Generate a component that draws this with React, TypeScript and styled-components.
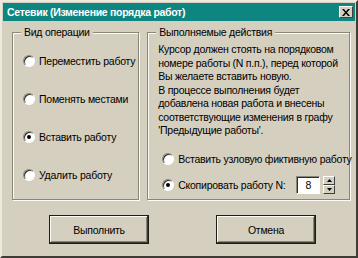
import React, { useState } from "react";
import styled, { createGlobalStyle } from "styled-components";

const GlobalStyle = createGlobalStyle`
  html, body {
    margin: 0;
    padding: 0;
    background: #d5cfbf;
  }
  body {
    font-family: "Liberation Sans", Arial, sans-serif;
    font-size: 10.5px;
    letter-spacing: -0.25px;
    color: #000;
  }
`;

const Window = styled.div`
  width: 358px;
  height: 258px;
  box-sizing: border-box;
  background: #d5cfbf;
  border: 2px solid;
  border-color: #ece9df #3f3c33 #3f3c33 #ece9df;
  display: flex;
  flex-direction: column;
  overflow: hidden;
`;

const TitleBar = styled.div`
  height: 18px;
  margin: 1px 1px 0;
  background: #0d8580;
  display: flex;
  align-items: center;
  justify-content: space-between;
  padding: 0 2px 0 4px;
`;

const Title = styled.span`
  color: #fff;
  font-family: "Liberation Sans", Arial, sans-serif;
  font-weight: bold;
  font-size: 10.5px;
  letter-spacing: -0.3px;
`;

const CloseButton = styled.div`
  width: 14px;
  height: 12px;
  box-sizing: border-box;
  background: #d5cfbf;
  border: 1px solid;
  border-color: #fff #404040 #404040 #fff;
  display: flex;
  align-items: center;
  justify-content: center;
`;

const Content = styled.div`
  flex: 1;
  display: flex;
  flex-direction: column;
  padding: 5px 6px 0 10px;
`;

const Groups = styled.div`
  display: flex;
  gap: 8px;
  height: 174px;
`;

const Group = styled.fieldset<{ $width: number }>`
  width: ${({ $width }) => $width}px;
  min-width: 0;
  box-sizing: border-box;
  margin: 0;
  padding: 0;
  border: 1px solid #8a8678;
  box-shadow: 1px 1px 0 #fbfaf5, inset 1px 1px 0 #fbfaf5;
  display: flex;
  flex-direction: column;
`;

const Legend = styled.legend`
  margin-left: 8px;
  padding: 0 3px;
  background: #d5cfbf;
  line-height: 13px;
`;

const OptionList = styled.div`
  display: flex;
  flex-direction: column;
  padding: 14px 0 0 10px;
  gap: 22px;
`;

const OptionRow = styled.label<{ $width?: number }>`
  display: flex;
  align-items: center;
  gap: 4px;
  height: 16px;
  width: ${({ $width }) => ($width ? `${$width}px` : "auto")};
  flex: none;
  white-space: nowrap;
  cursor: default;
`;

const Radio = styled.span<{ $checked: boolean }>`
  width: 12px;
  height: 12px;
  box-sizing: border-box;
  border-radius: 50%;
  background: #fff;
  border: 1px solid;
  border-color: #8a8678 #fff #fff #8a8678;
  box-shadow: inset 1px 1px 0 #2f2d27;
  position: relative;
  flex: none;
  &::after {
    content: "";
    display: ${({ $checked }) => ($checked ? "block" : "none")};
    position: absolute;
    left: 3px;
    top: 3px;
    width: 4px;
    height: 4px;
    border-radius: 50%;
    background: #000;
  }
`;

const Description = styled.p`
  margin: 4px 0 0 10px;
  line-height: 13.5px;
  white-space: nowrap;
`;

const Actions = styled.div`
  display: flex;
  flex-direction: column;
  padding: 13px 0 0 14px;
  gap: 9px;
`;

const SpinRow = styled.div`
  display: flex;
  align-items: center;
  height: 18px;
`;

const SpinField = styled.div`
  width: 24px;
  height: 18px;
  box-sizing: border-box;
  background: #fff;
  border: 1px solid;
  border-color: #8a8678 #fff #fff #8a8678;
  box-shadow: inset 1px 1px 0 #2f2d27;
  display: flex;
  align-items: center;
  justify-content: center;
`;

const SpinButtons = styled.div`
  margin-left: 3px;
  display: flex;
  flex-direction: column;
  height: 18px;
`;

const SpinButton = styled.div`
  width: 12px;
  height: 9px;
  box-sizing: border-box;
  border: 1px solid;
  border-color: #fff #404040 #404040 #fff;
  display: flex;
  align-items: center;
  justify-content: center;
`;

const ButtonRow = styled.div`
  display: flex;
  gap: 67px;
  padding: 15px 0 0 37px;
`;

const Button = styled.button`
  width: 100px;
  height: 29px;
  box-sizing: border-box;
  background: #d5cfbf;
  font-family: inherit;
  font-size: 10.5px;
  letter-spacing: -0.25px;
  color: #000;
  border: 1px solid #1e1c17;
  box-shadow: inset -1px -1px 0 #3f3c33, inset 1px 1px 0 #fbfaf5,
    inset -2px -2px 0 #8a8678;
  padding: 0;
`;

const operations = [
  "Переместить работу",
  "Поменять местами",
  "Вставить работу",
  "Удалить работу",
];

const descriptionLines = [
  "Курсор должен стоять на порядковом",
  "номере работы (N п.п.), перед которой",
  "Вы желаете вставить новую.",
  "В процессе выполнения будет",
  "добавлена новая работа и внесены",
  "соответствующие изменения в графу",
  "'Предыдущие работы'.",
];

function App() {
  const [operation, setOperation] = useState(2);
  const [action, setAction] = useState(1);

  return (
    <>
      <GlobalStyle />
      <Window>
        <TitleBar>
          <Title>Сетевик (Изменение порядка работ)</Title>
          <CloseButton>
            <svg width="8" height="7" viewBox="0 0 8 7">
              <path d="M0 0h2l2 2.5L6 0h2L5 3.5 8 7H6L4 4.5 2 7H0l3-3.5z" fill="#000" />
            </svg>
          </CloseButton>
        </TitleBar>
        <Content>
          <Groups>
            <Group $width={128}>
              <Legend>Вид операции</Legend>
              <OptionList>
                {operations.map((text, i) => (
                  <OptionRow key={text} onClick={() => setOperation(i)}>
                    <Radio $checked={operation === i} />
                    {text}
                  </OptionRow>
                ))}
              </OptionList>
            </Group>
            <Group $width={204}>
              <Legend>Выполняемые действия</Legend>
              <Description>
                {descriptionLines.map((line) => (
                  <React.Fragment key={line}>
                    {line}
                    <br />
                  </React.Fragment>
                ))}
              </Description>
              <Actions>
                <OptionRow onClick={() => setAction(0)}>
                  <Radio $checked={action === 0} />
                  Вставить узловую фиктивную работу
                </OptionRow>
                <SpinRow>
                  <OptionRow $width={134} onClick={() => setAction(1)}>
                    <Radio $checked={action === 1} />
                    Скопировать работу N:
                  </OptionRow>
                  <SpinField>8</SpinField>
                  <SpinButtons>
                    <SpinButton>
                      <svg width="5" height="3" viewBox="0 0 5 3">
                        <path d="M2.5 0L5 3H0z" fill="#000" />
                      </svg>
                    </SpinButton>
                    <SpinButton>
                      <svg width="5" height="3" viewBox="0 0 5 3">
                        <path d="M0 0h5L2.5 3z" fill="#000" />
                      </svg>
                    </SpinButton>
                  </SpinButtons>
                </SpinRow>
              </Actions>
            </Group>
          </Groups>
          <ButtonRow>
            <Button>Выполнить</Button>
            <Button>Отмена</Button>
          </ButtonRow>
        </Content>
      </Window>
    </>
  );
}

export default App;
